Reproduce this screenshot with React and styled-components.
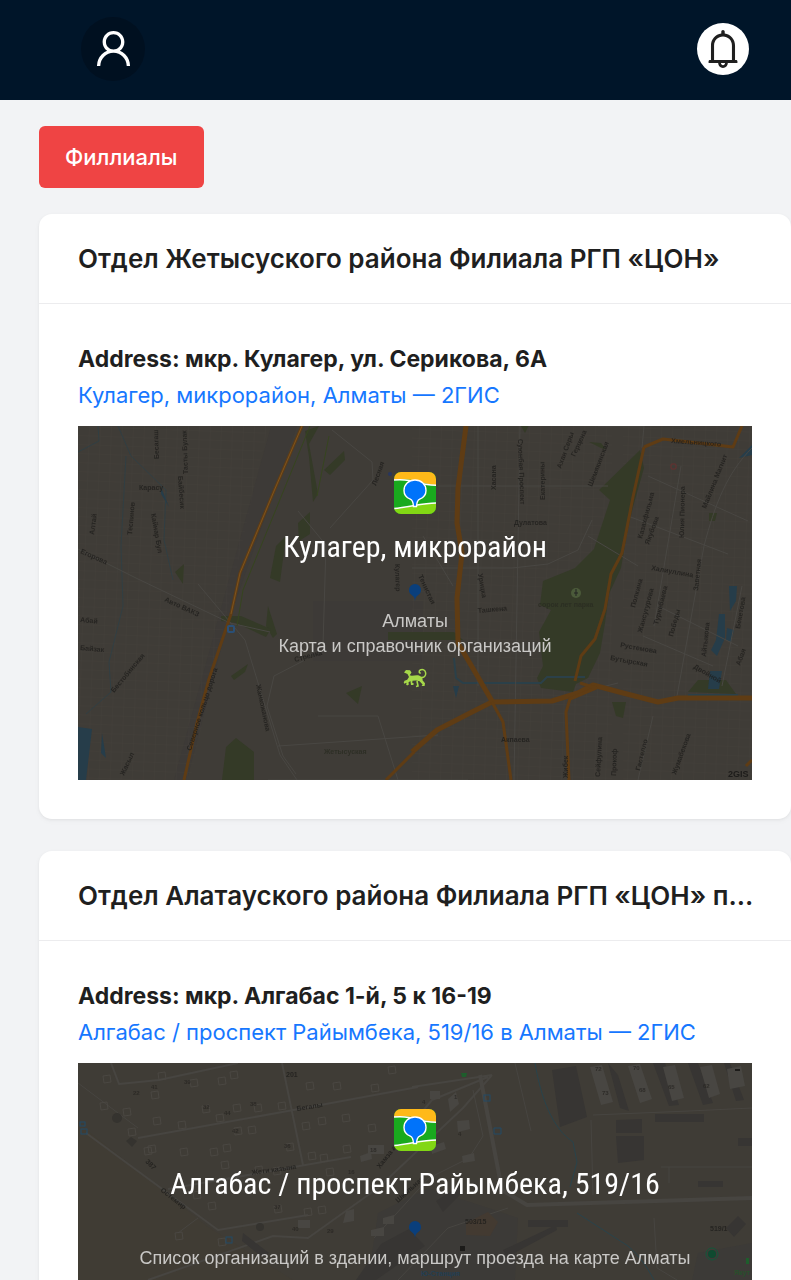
import React from "react";
import styled, { createGlobalStyle } from "styled-components";
import { AiOutlineUser, AiOutlineBell } from "react-icons/ai";

const GlobalStyle = createGlobalStyle`
  *, *::before, *::after { box-sizing: border-box; }
  body {
    margin: 0;
    background: #f2f3f5;
    color: #1f1f1f;
    font-family: Inter, "Liberation Sans", sans-serif;
  }
`;

const TopBar = styled.header`
  display: flex;
  align-items: center;
  justify-content: space-between;
  height: 100px;
  padding: 0 42px 3px 81px;
  background: #001529;
`;

const RoundButton = styled.button`
  display: flex;
  align-items: center;
  justify-content: center;
  width: ${(p) => p.$size}px;
  height: ${(p) => p.$size}px;
  padding: 0;
  border: 0;
  border-radius: 50%;
  background: ${(p) => p.$fill};
  color: ${(p) => p.$ink};
  cursor: pointer;
`;

const Page = styled.main`
  display: flex;
  flex-direction: column;
  align-items: flex-start;
  padding: 26px 0 32px 39px;
`;

const BranchesButton = styled.button`
  height: 62px;
  padding: 0 26px;
  border: 0;
  border-radius: 6px;
  background: #ef4444;
  color: #fff;
  font: 500 22px/32px Inter, "Liberation Sans", sans-serif;
  cursor: pointer;
`;

const CardList = styled.div`
  display: flex;
  flex-direction: column;
  gap: 32px;
  width: 100%;
  margin-top: 26px;
`;

const Card = styled.article`
  border-radius: 13px;
  background: #fff;
  box-shadow: 0 1px 3px rgba(0, 0, 0, 0.05), 0 2px 6px rgba(0, 0, 0, 0.03);
`;

const CardHead = styled.div`
  display: flex;
  align-items: center;
  height: 90px;
  padding: 0 32px 0 39px;
  border-bottom: 1px solid #ececee;
`;

const CardTitle = styled.h2`
  flex: 1;
  min-width: 0;
  margin: 0;
  overflow: hidden;
  text-overflow: ellipsis;
  white-space: nowrap;
  font-size: 26px;
  font-weight: 600;
  line-height: 40px;
`;

const CardBody = styled.div`
  display: flex;
  flex-direction: column;
  padding: 37px 39px 39px;
`;

const Address = styled.strong`
  font-size: 23px;
  font-weight: 700;
  line-height: 36px;
`;

const MapLink = styled.a`
  color: #1677ff;
  font-size: 22px;
  line-height: 36px;
  text-decoration: none;
`;

const Preview = styled.a`
  position: relative;
  display: block;
  margin-top: 13px;
  aspect-ratio: 674 / 354;
  overflow: hidden;
  background: #3f3c37;
  color: #fff;
  text-decoration: none;
`;

const MapArt = styled.svg`
  position: absolute;
  inset: 0;
  width: 100%;
  height: 100%;
  font-family: "Liberation Sans", sans-serif;
`;

const PreviewText = styled.div`
  position: relative;
  display: flex;
  flex-direction: column;
  align-items: center;
  padding-top: 46px;
  text-align: center;
`;

const PreviewTitle = styled.span`
  margin-top: 12px;
  font-family: "Liberation Sans Narrow", "Roboto Condensed", "Liberation Sans", sans-serif;
  font-size: 30px;
  line-height: 42px;
`;

const PreviewNote = styled.span`
  margin-top: 41px;
  color: #c9c8c6;
  font-family: "Liberation Sans", sans-serif;
  font-size: 18px;
  line-height: 25px;
`;

const NoteLine = styled.span`
  display: block;
`;

const Mascot = styled.svg`
  margin-top: 9px;
`;

const streets = (items, fill = "#1f1e1c", size = 7) => (
  <g fill={fill} fontSize={size} fontWeight="700" opacity="0.8">
    {items.map(([x, y, angle, name]) => (
      <text key={`${x}-${y}`} transform={`translate(${x} ${y}) rotate(${angle})`}>
        {name}
      </text>
    ))}
  </g>
);

function GisLogo() {
  return (
    <svg width="42" height="42" viewBox="0 0 42 42" aria-hidden="true">
      <defs>
        <clipPath id="gisTile"><rect width="42" height="42" rx="7" /></clipPath>
      </defs>
      <g clipPath="url(#gisTile)">
        <rect width="42" height="42" fill="#19aa1e" />
        <path d="M0 0h42v13C31 13 23 8 13 7.600 8 7.500 4 8 0 8z" fill="#ffb919" />
        <path d="M0 37c14-1 28-6 42-6v11H0z" fill="#82d714" />
        <path d="M0 8c5-.5 10-.5 15 .6 9 2.300 17 4.600 27 4.600" fill="none" stroke="#fff" strokeWidth="1.500" />
        <path d="M0 36.500c14-.8 28-5.500 42-5.500" fill="none" stroke="#fff" strokeWidth="1.500" />
        <path d="M21 8c6.400 0 11 4.700 11 10.500 0 5-3.300 7.500-6.300 8.700-2.500 1-3 3.300-3.200 7.300h-3c-.2-4-.7-6.300-3.200-7.300-3-1.200-6.300-3.700-6.300-8.700C10 12.700 14.600 8 21 8z" fill="#0073fa" stroke="#fff" strokeWidth="1.400" />
      </g>
    </svg>
  );
}

function Leopard() {
  return (
    <Mascot width="24" height="20" viewBox="0 0 24 20" aria-hidden="true">
      <path d="M1 4.500 3 2l4 .2 1.500 2.300-1.800 2.700C9 8.500 13 6.500 16 7.500c2.500.8 4 2.500 3.500 4.700l2.500 3-.4 2.800h-3l1-1.500-3-3.300-3.600-.7-3.500.2-.2 2.300 1.400.3-.3 1.700H8l-.6-4-2 1.500.5 2-1.800 1-1-1 .6-1.700-2-.4-.7-1.500 3.200-1.200L6 9 4.500 6z" fill="#a6d84a" />
      <path d="M18 9.500c3 .4 5-1.500 4.700-4.300C22.400 2 19.500.8 17.300 2c-1.800 1-1.300 3.300.5 3" fill="none" stroke="#a6d84a" strokeWidth="1.500" />
      <path d="m5 13-4 2M14 13l1 5-2 .5" fill="none" stroke="#a6d84a" strokeWidth="1.600" />
    </Mascot>
  );
}

function Pin() {
  return (
    <path d="M337 158a6 6 0 0 1 6 6c0 3.600-2.500 4.800-4.400 6.400-1 .8-1.300 2-1.600 4.600-.3-2.600-.6-3.800-1.600-4.600-1.900-1.600-4.400-2.800-4.400-6.400a6 6 0 0 1 6-6z" fill="#0a3f7c" />
  );
}

function KulagerMap() {
  return (
    <MapArt viewBox="0 0 674 354" preserveAspectRatio="xMidYMid slice" aria-hidden="true">
      <defs>
        <pattern id="blocks" width="11" height="9" patternUnits="userSpaceOnUse" patternTransform="rotate(2)">
          <path d="M0 0H11M0 0V9" stroke="#4a4742" strokeWidth="1" opacity="0.3" />
        </pattern>
      </defs>
      <rect width="674" height="354" fill="#3f3c37" />
      <path d="M193 0h26l-70 200-40 154H96z M235 175h110v60H235z" fill="#3d3a37" />
      <path d="M0 0h190L112 354H0z M334 0h200v354H334z M545 0h129v354H545z" fill="url(#blocks)" />
      <g fill="#343a27">
        <path d="M227 5l14-5-10 18 9 50-5 8-4-45z M246 44l20-19 1 9-15 15z M220 97l12-11v22l-11 7z M198 120l10-10-6 46-10-4z M190 180l9 28-4 4-7-12z M153 250l17-12-3 8-11 8z M268 267l16-7-4 18z M97 146l9-8-1 20z M158 312l18 14v28h-32l4-33z" />
        <path d="M310 206h66l9 8h-75z M143 190h20l30 13-5 8-30-14-15-2z" />
        <path d="M521 64 562 24l4 18-11 39-6 26-6 35-12 26-4 29-5 30-12 25-12 6-3 8-32-4-4-10 6-12-4-34 12-22-11-5 3-24 32-13 19-19 16-49z" />
        <path d="M534 276h14l-3 16-7-2z M610 266l10-12h28l10 14z M443 0l8-1-4 8z M511 16l12 1 5 6-5-1z M631 87l8 0-2 8h-6z" />
      </g>
      <g fill="#263d4a">
        <path d="M0 301l14 2-6 51H0z M24 307l4 25-5-5z M83 61l8 20-8-13z M641 188l6 0v24l-8 18-6-6 5-10z M632 245h12l-3 18h-11z M651 160l8 0-1 15-6 10z M661 32l13-13v10z M375 260h6l-3 12z M649 202l7 2-3 12-5-2z" />
      </g>
      <g fill="none" stroke="#2b4049" strokeWidth="2">
        <path d="M0 26 21 15 20 0M40 0l13 30 35 34-2 50 9 40M48 30l-5 90 2 60-14 56 2 30-25 22" strokeWidth="1" opacity="0.7" />
        <path d="M376 232l2 20 7 5h78l6-6h38M610 269h50" />
      </g>
      <g fill="none" stroke="#494743" strokeWidth="2">
        <path d="M0 123 60 153 152 197 192 206M120 158l47 56 35 115 17 25M254 4l40 32 1 18-43 48M220 85l28 34-3 100-20 16-29 15-7 30 16 50 13 18M334 142h100l36-4 30-14 14-30M520 0h46l-2 22M442 0l-6 354M360 60h170M400 0v260M500 267l40-10M190 354h200M510 110l50 30M550 90l100 38M570 50l100 45M580 180l80 40M565 210l70 30M240 290h60l20 64M345 110l30 50M200 320l160-11" strokeWidth="1" />
        <path d="M674 22c-25 25-37 56-48 98l-27 150M664 160l-20 100M603 40l-27 160M575 290l-15 64" strokeWidth="1" />
      </g>
      <path d="M232 0 165 164l-6 36M251 10l-12 60" fill="none" stroke="#36451f" strokeWidth="1" />
      <g fill="none" stroke="#5f3c14" strokeWidth="5" strokeLinejoin="round">
        <path d="M388 0l-8 62-1 35 5 30-5 45 1 45 34 58M334 326l25-22 35-18 20-10 60-1 26-8 15-8 30 8 35 9 20-4h74" />
        <path d="M224 0 196 65l-34 82-9 41-22 65-12 44-13 57" strokeWidth="3" />
        <path d="M308 354l28-28M566 21l-11 50-11 56-11 21-6 35-10 30-14 17-6 25" strokeWidth="3" />
        <path d="M414 276l11 20 8 58M502 257l16 5-26 11-4 13 3 68M566 21l19-8 70 8 9-21M668 340l6-6" strokeWidth="3" />
      </g>
      <path d="M224 0 196 65l-34 82-9 41" fill="none" stroke="#7d541f" strokeWidth="1" />
      <circle cx="498" cy="167" r="5" fill="#4b5a3a" />
      <path d="M498 163v7m-2-3h4" stroke="#222" strokeWidth="1" />
      <rect x="150" y="200" width="6" height="6" rx="1" fill="none" stroke="#2a4f75" strokeWidth="2" />
      <rect x="593" y="38" width="5" height="5" rx="1" fill="none" stroke="#6a2f2f" strokeWidth="1" />
      <circle cx="312" cy="48" r="2" fill="#28365f" />
      {streets([
        [61, 64, 0, "Карасу"], [81, 33, -92, "Бесагаш"], [110, 48, -92, "Тасты Булак"],
        [100, 50, 86, "Байбесик"], [16, 109, -82, "Алтай"], [54, 109, -85, "Теспинов"],
        [73, 88, 80, "Кайнар Бул"], [2, 127, 24, "Егорова"], [86, 175, 25, "Авто ВАКЗ"],
        [36, 267, -50, "Бестобинская"], [113, 325, -72, "Северное кольцо дорога"],
        [178, 259, 78, "Жанкожанова"], [217, 236, -15, "Стрелка"],
        [317, 138, 88, "Кулагер"], [298, 60, -70, "Лесная"], [440, 13, 88, "Суюнбая Проспект"],
        [418, 64, -90, "Хасана"], [467, 74, -91, "Екатерины"], [483, 43, -70, "Ахан Серы"],
        [514, 61, -69, "Шемякинская"], [497, 31, -65, "Герцена"], [436, 99, 0, "Дулатова"],
        [400, 148, 80, "Урицка"], [400, 187, -5, "Ташкена"],
        [593, 17, 4, "Хмельницкого"], [628, 83, -68, "Майлина Магнит"],
        [564, 113, -75, "Казахфильма"], [606, 112, -89, "Юлия Пионера"],
        [571, 119, -70, "Якубова"], [573, 144, 10, "Халиуллина"],
        [557, 182, -75, "Полкина"], [564, 207, -75, "Жансугурова"], [580, 199, -76, "Туркебаева"],
        [620, 165, -84, "Заветная"], [595, 211, -75, "Победы"], [542, 221, 10, "Рустемова"],
        [532, 234, 10, "Бутырская"], [628, 231, -84, "Айтыкова"], [615, 242, 30, "Двойной"],
        [423, 316, 0, "Акпаева"], [490, 352, -90, "Жибек"], [522, 351, -87, "Сейфулина"],
        [538, 350, -88, "Прокоф"], [562, 345, -76, "Гастелло"], [598, 349, -70, "Жумабекова"],
        [662, 240, -70, "Абая"], [662, 203, -80, "Бекетова"], [46, 350, -65, "Жасыл"],
        [340, 150, 65, "Тенистая"], [2, 196, 5, "Абай"], [2, 224, 5, "Байзак"],
      ])}
      {streets([[246, 328, 0, "Жетысуская"], [460, 181, 0, "сорок лет парка"]], "#2a2c22")}
      <text x="650" y="351" fontSize="9" fontWeight="700" fill="#1d1c1a">2GIS</text>
      <Pin />
    </MapArt>
  );
}

const houses = [
  [25, 13], [80, 10], [112, 17], [140, 15], [152, 9], [73, 29], [45, 46], [228, 20], [255, 20], [293, 22], [310, 4],
  [75, 55], [100, 59], [124, 43], [176, 42], [138, 52], [155, 42], [200, 40], [224, 60], [240, 55], [264, 52],
  [156, 65], [170, 64], [66, 85], [102, 86], [132, 86], [145, 82], [208, 81], [230, 90], [242, 92], [265, 83],
  [115, 129], [143, 99], [177, 104], [195, 105], [248, 106], [50, 66], [70, 83], [22, 40],
  [130, 140], [226, 146], [240, 144], [196, 143], [290, 62], [140, 176], [97, 170],
];

function AlgabasMap() {
  return (
    <MapArt viewBox="0 0 674 354" preserveAspectRatio="xMidYMid slice" aria-hidden="true">
      <rect width="674" height="354" fill="#3f3c36" />
      <path d="M0 60 130 164 215 217 215 354H0z" fill="#403c34" />
      <path d="M300 150 350 125 440 155 430 354 270 354z M620 190l54-10v174h-90z" fill="#3c3a37" />
      <g fill="none" stroke="#474541" strokeLinejoin="round">
        <path d="M33 0l8 21 40-4L160 0M60 75 210 48 340 24M204 0l21 102M90 126l183-32M8 70l132 97 90-15M334 24l80-12M414 12 385 45 300 125 230 175 195 173 70 217M410 14 354 37 318 80" strokeWidth="2" />
        <path d="M402 12l22 115 25 15 225-7" strokeWidth="4" />
        <path d="M395 27l10 46-14 22-40 20-55 60M437 0l16 68M515 52l96-4 63-3M513 57l2 75M583 104h91M591 104v16M576 155l3 50 20 12M430 145l-60 20-50 52" strokeWidth="1" />
        <path d="M0 20l60 45 M120 155l-20 15" strokeWidth="1" />
      </g>
      <path d="M457 0c6 35 17 65 38 79l4 20-7 25M499 150l51 33c12 10 22 25 29 40" fill="none" stroke="#29434b" strokeWidth="1" />
      <g fill="none" stroke="#4a4742" strokeWidth="1">
        {houses.map(([x, y]) => <path key={`${x}-${y}`} d={`M${x} ${y}l7-1 1 7-7 1z`} />)}
      </g>
      <g fill="#373533">
        <path d="M474 7l24-4 11 51-27 10z M538 57l26-1v14h-26z M538 73h28v24l-26 3z M577 51h49v8h-49z M540 12l-10-12 12 45 9 3z M575 0l16 43 10-1-14-42z M610 0l15 42 10-2-15-40z M646 0l12 38 8-1-14-37z M450 157h40v7h-40z M425 187l53-25 1 5-50 27z M620 118h25v6h-25z M660 75h14v8h-14z M165 170l26 20-7 4-20-16z M648 165l12-12 8 8-12 13z" />
        <path d="M303 181l28-15 16 17-29 20-20 14h-20z M358 138l23-15 4 6-20 20z" />
      </g>
      <g fill="#484642">
        <path d="M512 4l12-2 11 37-12 3z M550 3l12-2 12 35-12 4z M585 4l12-2 9 33-12 3z M622 4l12-2 8 29-11 4z M649 6l14-3 4 20-15 3z M352 28h10v8h-10z M370 36l8-7 3 12-9 8z M353 83l13-4 2 7-14 5z M379 58l12-1 1 9-12 3z M282 93l11-4 1 7-11 3z M290 82h16v9h-16z M268 148l8-2v12l-11 2z M220 157h12v8h-12z M293 167l13-3v9h-13z M305 155l11-3v9h-11z M384 93l12-3 1 8-12 2z" />
      </g>
      <path d="M388 160l22-11 10 10-8 14-24-1z" fill="#433a31" />
      <g fill="none" stroke="#224a66" strokeWidth="1">
        <rect x="2" y="59" width="5" height="4" /><rect x="3" y="66" width="6" height="5" />
        <rect x="148" y="174" width="6" height="6" /><rect x="406" y="32" width="6" height="6" />
        <path d="M416 65h7v6h-7z" />
      </g>
      <circle cx="634" cy="191" r="6" fill="none" stroke="#12583a" strokeWidth="1" />
      <circle cx="634" cy="191" r="4" fill="#0f4a30" />
      <path d="M383 10h6l-1 4h-4z M668 195h3v6h-3z" fill="#1e5d2c" />
      <path d="M382 183h5v5h-5z M657 6h5v2h-5z" fill="#1c1b19" />
      <g fill="#35332f">
        <circle cx="39" cy="55" r="5" /><circle cx="182" cy="164" r="4" /><path d="M48 78l5-4 6 4-5 6z" />
      </g>
      {streets([
        [219, 48, -9, "Бегалы"], [174, 112, -8, "Жети казына"], [82, 128, 38, "Остемир"],
        [302, 106, -52, "Хамза ата"], [208, 14, 0, "201"], [387, 161, 0, "503/15"],
        [632, 168, 0, "519/1"], [67, 99, 45, "387"], [320, 140, -42, "Школьная"],
      ])}
      {streets([
        [125, 46, 0, "32"], [172, 43, 0, "38"], [146, 52, 0, "44"], [154, 70, 0, "42"], [206, 85, 0, "36"],
        [196, 146, 0, "37"], [292, 89, 0, "18"], [270, 111, 0, "16"], [214, 168, 0, "40"], [249, 170, 0, "29"],
        [517, 8, 0, "72"], [524, 32, 0, "73"], [555, 7, 0, "70"], [561, 29, 0, "68"], [590, 26, 0, "65"],
        [625, 25, 0, "62"], [376, 36, 0, "1"], [344, 41, 0, "4"], [380, 73, 0, "4"], [73, 26, 0, "41"],
        [106, 21, 0, "39"], [55, 32, 0, "22"],
      ], "#282623", 6)}
      {streets([[343, 213, 0, "Ю-Станция"]], "#1c405a")}
      {streets([[656, 212, 0, "Якут"]], "#25552a")}
      <Pin />
    </MapArt>
  );
}

const branches = [
  {
    title: "Отдел Жетысуского района Филиала РГП «ЦОН»",
    address: "Address: мкр. Кулагер, ул. Серикова, 6А",
    link: "Кулагер, микрорайон, Алматы — 2ГИС",
    place: "Кулагер, микрорайон",
    note: ["Алматы", "Карта и справочник организаций"],
    Map: KulagerMap,
    mascot: true,
  },
  {
    title: "Отдел Алатауского района Филиала РГП «ЦОН» п...",
    address: "Address: мкр. Алгабас 1-й, 5 к 16-19",
    link: "Алгабас / проспект Райымбека, 519/16 в Алматы — 2ГИС",
    place: "Алгабас / проспект Райымбека, 519/16",
    note: ["Список организаций в здании, маршрут проезда на карте Алматы"],
    Map: AlgabasMap,
  },
];

function BranchCard({ title, address, link, place, note, Map, mascot }) {
  return (
    <Card>
      <CardHead>
        <CardTitle>{title}</CardTitle>
      </CardHead>
      <CardBody>
        <Address>{address}</Address>
        <MapLink href="#map">{link}</MapLink>
        <Preview href="#map">
          <Map />
          <PreviewText>
            <GisLogo />
            <PreviewTitle>{place}</PreviewTitle>
            <PreviewNote>
              {note.map((line) => <NoteLine key={line}>{line}</NoteLine>)}
            </PreviewNote>
            {mascot && <Leopard />}
          </PreviewText>
        </Preview>
      </CardBody>
    </Card>
  );
}

export default function App() {
  return (
    <>
      <GlobalStyle />
      <TopBar>
        <RoundButton $size={64} $fill="#001020" $ink="#fff" aria-label="Profile">
          <AiOutlineUser size={45} />
        </RoundButton>
        <RoundButton $size={52} $fill="#fff" $ink="#1f1f1f" aria-label="Notifications">
          <AiOutlineBell size={44} />
        </RoundButton>
      </TopBar>
      <Page>
        <BranchesButton>Филлиалы</BranchesButton>
        <CardList>
          {branches.map((branch) => <BranchCard key={branch.title} {...branch} />)}
        </CardList>
      </Page>
    </>
  );
}
